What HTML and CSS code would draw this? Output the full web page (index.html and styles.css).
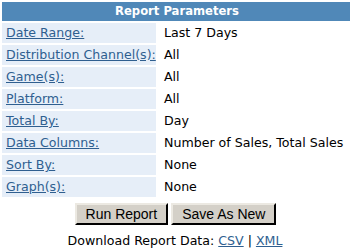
FILE: index.html
```html
<!DOCTYPE html>
<html>
<head>
<meta charset="utf-8">
<link rel="stylesheet" href="styles.css">
</head>
<body>
<div class="panel">
  <div class="params">
    <div class="head">Report Parameters</div>
    <div class="lbl"><a href="#">Date Range:</a></div><div class="val">Last 7 Days</div>
    <div class="lbl"><a href="#">Distribution Channel(s):</a></div><div class="val">All</div>
    <div class="lbl"><a href="#">Game(s):</a></div><div class="val">All</div>
    <div class="lbl"><a href="#">Platform:</a></div><div class="val">All</div>
    <div class="lbl"><a href="#">Total By:</a></div><div class="val">Day</div>
    <div class="lbl"><a href="#">Data Columns:</a></div><div class="val">Number of Sales, Total Sales</div>
    <div class="lbl"><a href="#">Sort By:</a></div><div class="val">None</div>
    <div class="lbl"><a href="#">Graph(s):</a></div><div class="val">None</div>
  </div>
  <div class="actions">
    <button class="btn run">Run Report</button>
    <button class="btn save">Save As New</button>
  </div>
  <div class="download">Download Report Data: <a href="#">CSV</a> | <a href="#">XML</a></div>
</div>
</body>
</html>
```
FILE: styles.css
```css
html, body {
  margin: 0;
  padding: 0;
  background: #ffffff;
  overflow: hidden;
}
body {
  font-family: "DejaVu Sans", Verdana, sans-serif;
  font-size: 12.6px;
  color: #000000;
}
.panel {
  width: 350px;
}
.params {
  display: grid;
  grid-template-columns: 154px 192px;
  gap: 2px;
  padding: 2px 0 0 2px;
}
.head {
  grid-column: 1 / span 2;
  background: #5088b8;
  color: #ffffff;
  font-weight: bold;
  font-size: 11.6px;
  text-align: center;
  height: 19px;
  line-height: 19px;
  padding-left: 2px;
}
.lbl {
  background: #e6eef8;
  height: 20px;
  line-height: 20px;
  padding-left: 4px;
  white-space: nowrap;
}
.val {
  height: 20px;
  line-height: 20px;
  padding-left: 6px;
  white-space: nowrap;
}
a {
  color: #2f5f90;
  text-decoration: underline;
}
.actions {
  display: flex;
  justify-content: center;
  gap: 3px;
  margin-top: 6px;
  padding-left: 1px;
}
.btn {
  font-family: "Liberation Sans", Arial, sans-serif;
  font-size: 14px;
  background: #d4d0c8;
  color: #000000;
  border: 2px outset #ece9e2;
  border-right-color: #404040;
  border-bottom-color: #404040;
  height: 22px;
  padding: 0 9px;
  margin: 0;
}
.download {
  text-align: center;
  margin-top: 9px;
  line-height: 14px;
}
```
